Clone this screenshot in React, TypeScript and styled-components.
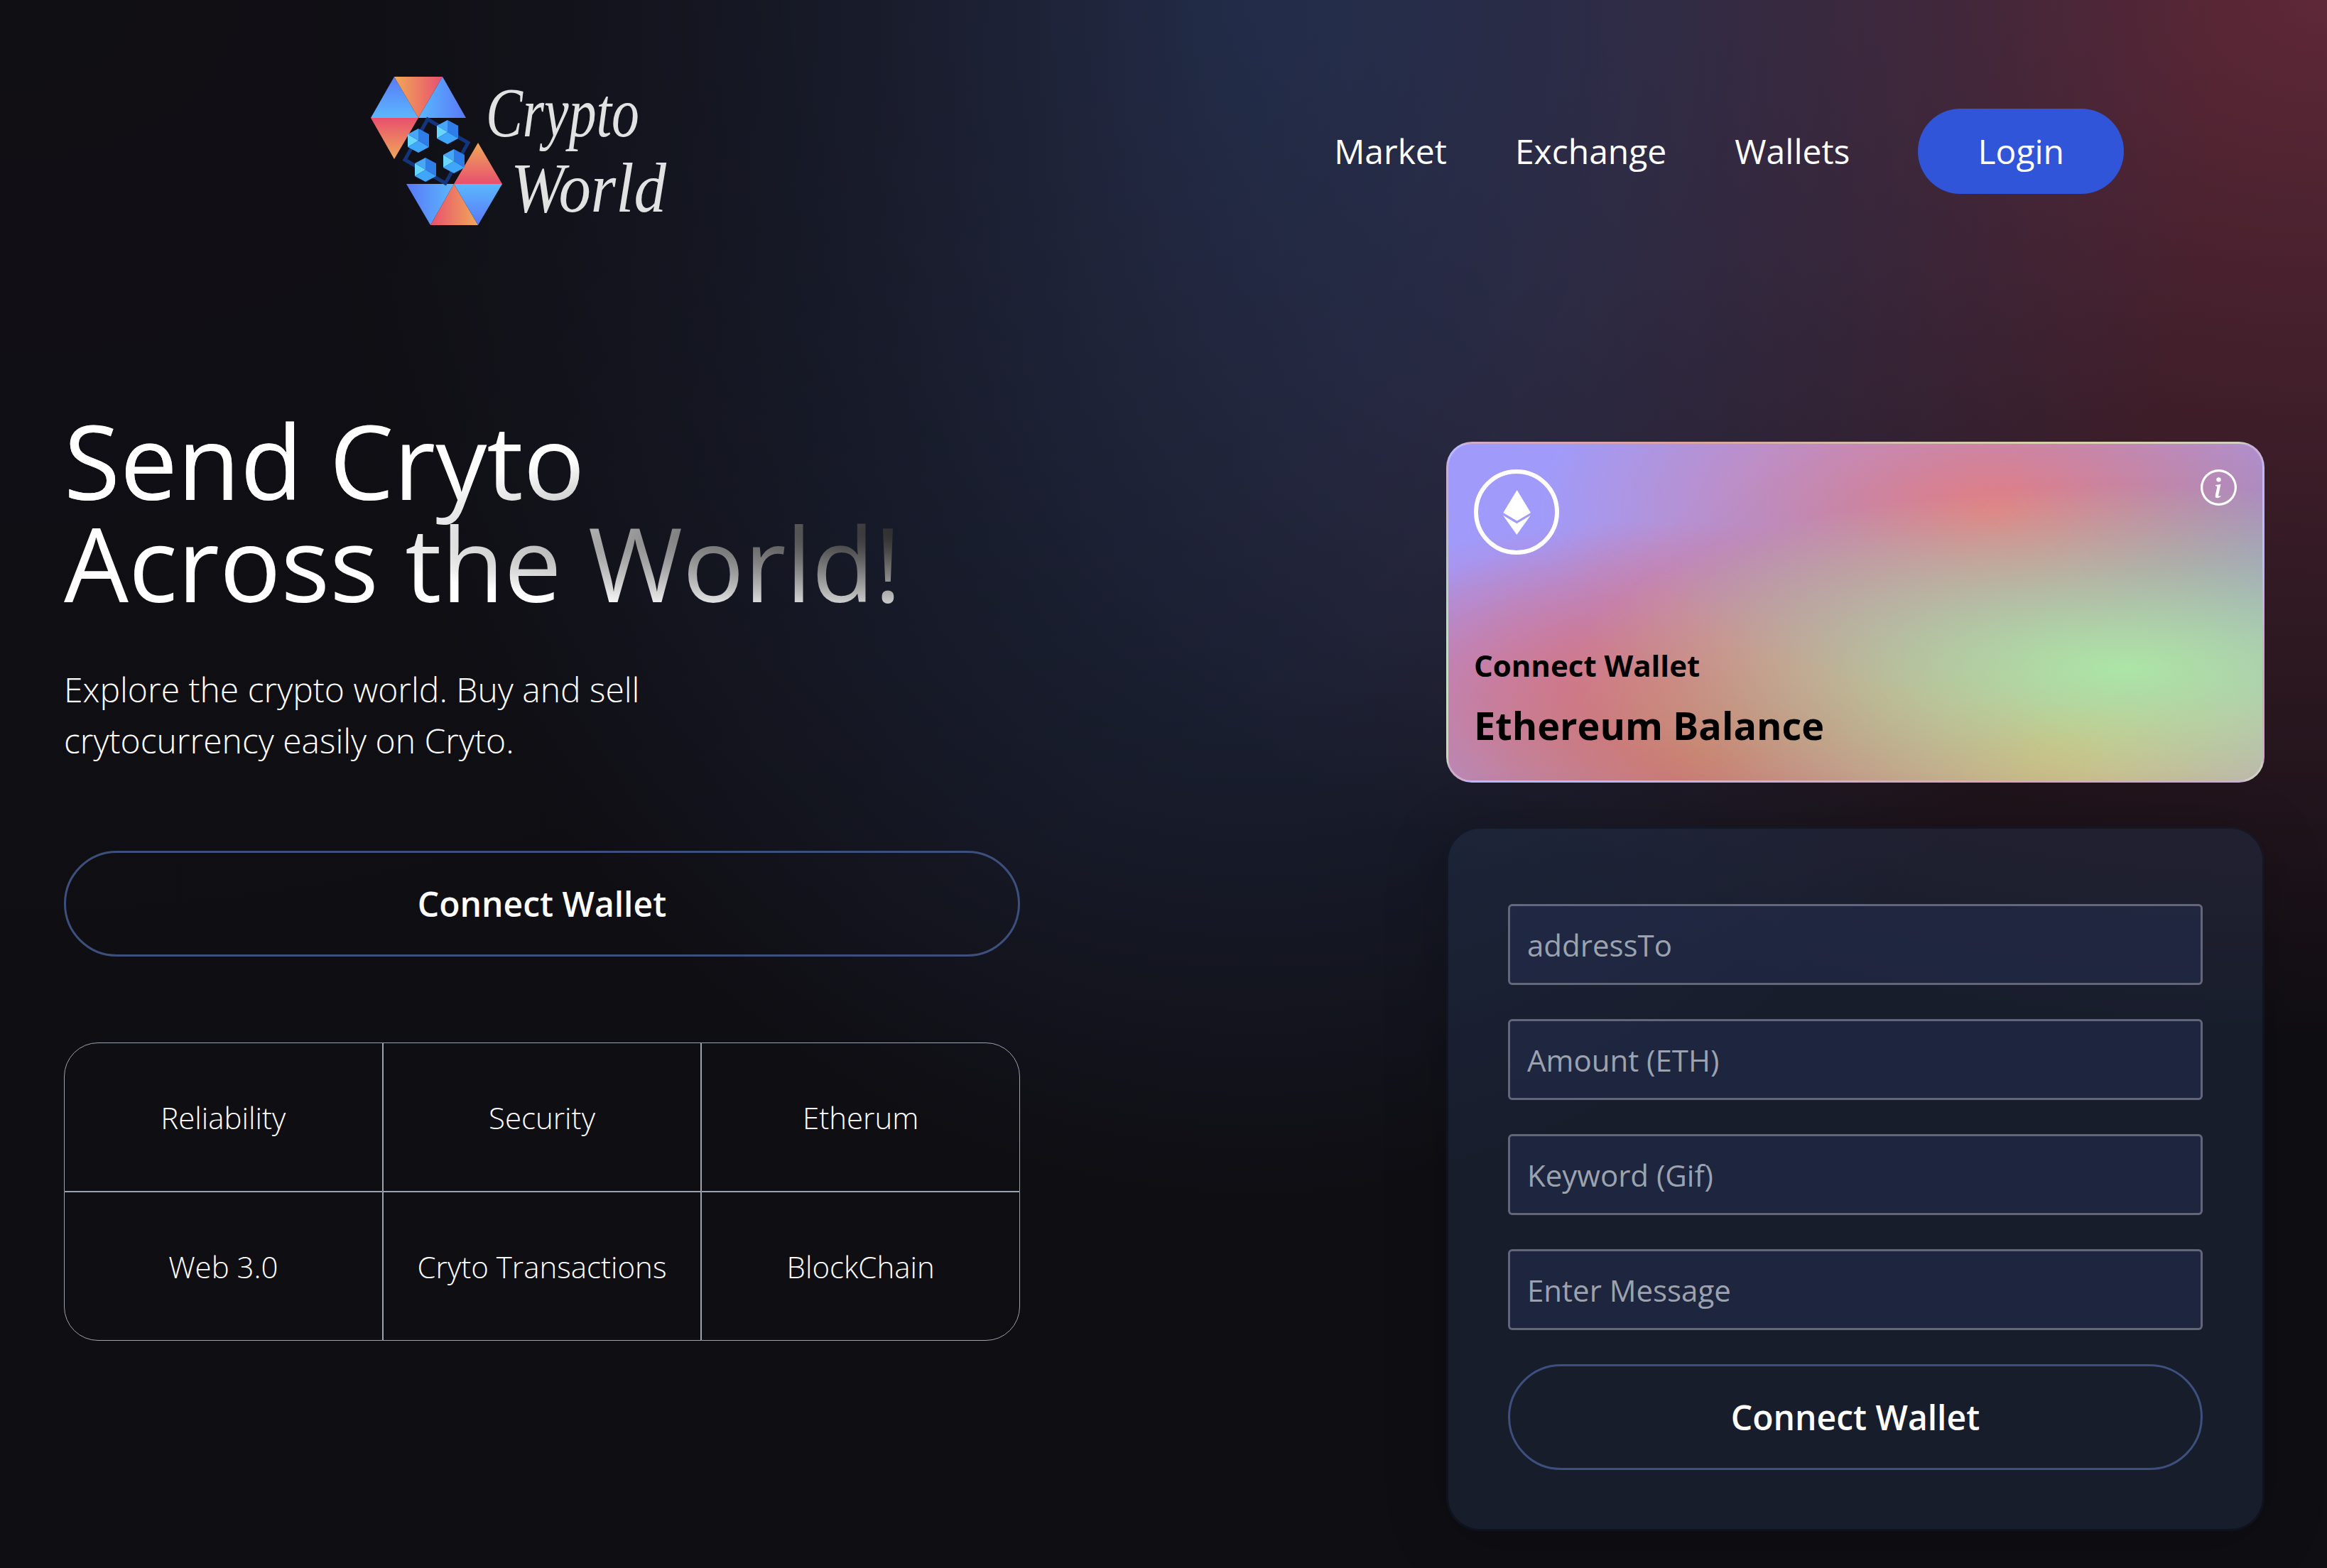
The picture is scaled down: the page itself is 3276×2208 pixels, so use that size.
import React from 'react';
import styled, { createGlobalStyle } from 'styled-components';
import { SiEthereum } from 'react-icons/si';
import { BsInfoCircle } from 'react-icons/bs';

const GlobalStyle = createGlobalStyle`
  html, body {
    margin: 0;
    background: #0f0e13;
  }
  * {
    box-sizing: border-box;
  }
`

const Page = styled.div`
  min-height: 2208px;
  overflow: hidden;
  font-family: "Open Sans", sans-serif;
  color: #fff;
  background-color: #0f0e13;
  background-image:
    radial-gradient(at 0% 0%, hsla(253, 16%, 7%, 1) 0, transparent 50%),
    radial-gradient(at 54% 0%, #28365a 0, transparent 54%),
    radial-gradient(at 100% 0%, #5e2838 0, transparent 47%);
`
const Nav = styled.nav`
  display: flex;
  align-items: center;
  justify-content: space-between;
  padding: 91px 286px 91px 510px;
`
const LogoMark = styled.svg`
  display: block;
  width: 500px;
  height: 244px;
`
const LogoText = styled.text`
  font-family: "Liberation Serif", serif;
  font-style: italic;
  font-size: 100px;
  fill: #e2e2e2;
`
const NavList = styled.ul`
  display: flex;
  align-items: center;
  margin: 0;
  padding: 0;
  list-style: none;
  font-size: 48px;
  line-height: 72px;
`
const NavItem = styled.li`
  margin: 0 48px;
`
const LoginItem = styled.li`
  margin-left: 48px;
  padding: 24px 84px;
  border-radius: 60px;
  background: #3155d9;
`
const Main = styled.main`
  display: flex;
  justify-content: space-between;
  padding: 135px 88px 0 90px;
`
const Intro = styled.section`
  width: 1346px;
`
const Heading = styled.h1`
  margin: 0;
  padding: 15px 0 9px;
  font-size: 144px;
  line-height: 144px;
  font-weight: 400;
  color: transparent;
  background-color: #fff;
  background-image:
    radial-gradient(at 4% 36%, hsla(0, 0%, 100%, 1) 0, transparent 53%),
    radial-gradient(at 100% 60%, rgb(0, 0, 0) 0, transparent 50%);
  -webkit-background-clip: text;
  background-clip: text;
`
const Lead = styled.p`
  width: 1000px;
  margin: 62px 0 0;
  font-size: 48px;
  line-height: 72px;
  font-weight: 300;
`
const WalletButton = styled.button<{ $spaced?: boolean }>`
  display: block;
  width: 100%;
  height: 149px;
  margin-top: ${props => props.$spaced ? "119px" : "0"};
  padding: 0;
  border: 3px solid #3d4f7c;
  border-radius: 75px;
  background: transparent;
  color: #fff;
  font-family: inherit;
  font-size: 48px;
  font-weight: 600;
`
const Features = styled.div`
  display: grid;
  grid-template-columns: repeat(3, 1fr);
  margin-top: 121px;
`
const Feature = styled.div<{ $corner?: string }>`
  display: flex;
  align-items: center;
  justify-content: center;
  height: 210px;
  border: 1px solid #9ca3af;
  border-radius: ${props => props.$corner || "0"};
  font-size: 42px;
  font-weight: 300;
`
const Side = styled.section`
  width: 1152px;
  padding-top: 61px;
`
const EthCard = styled.div`
  display: flex;
  flex-direction: column;
  justify-content: space-between;
  height: 480px;
  padding: 36px;
  border: 3px solid rgba(255, 255, 255, 0.3);
  border-radius: 36px;
  color: #000;
  background-color: #a09bfa;
  background-image:
    radial-gradient(at 83% 67%, rgb(172, 229, 166) 0, transparent 58%),
    radial-gradient(at 67% 20%, hsla(357, 65%, 69%, 1) 0, transparent 59%),
    radial-gradient(at 88% 35%, hsla(222, 60%, 65%, 1) 0, transparent 50%),
    radial-gradient(at 31% 91%, hsla(9, 48%, 61%, 1) 0, transparent 52%),
    radial-gradient(at 27% 71%, hsla(336, 65%, 65%, 1) 0, transparent 49%),
    radial-gradient(at 74% 89%, hsla(30, 75%, 65%, 1) 0, transparent 51%),
    radial-gradient(at 53% 75%, hsla(174, 65%, 68%, 1) 0, transparent 45%);
`
const CardTop = styled.div`
  display: flex;
  align-items: flex-start;
  justify-content: space-between;
  color: #fff;
`
const EthBadge = styled.div`
  display: flex;
  align-items: center;
  justify-content: center;
  width: 120px;
  height: 120px;
  border: 6px solid #fff;
  border-radius: 50%;
`
const CardLabel = styled.p`
  margin: 0;
  font-size: 42px;
  line-height: 60px;
  font-weight: 700;
`
const CardTitle = styled.p`
  margin: 12px 0 0;
  font-size: 54px;
  line-height: 84px;
  font-weight: 700;
`
const SendForm = styled.form`
  display: flex;
  flex-direction: column;
  margin-top: 62px;
  padding: 106px 84px 83px;
  border: 3px solid rgba(0, 0, 0, 0.3);
  border-radius: 48px;
  background: rgba(38, 52, 82, 0.4);
  box-shadow: 0 12px 90px rgba(0, 0, 0, 0.2);
`
const Field = styled.input`
  width: 100%;
  height: 114px;
  margin-bottom: 48px;
  padding: 24px;
  border: 3px solid rgba(255, 255, 255, 0.3);
  border-radius: 6px;
  outline: none;
  background: rgba(39, 51, 89, 0.4);
  color: #fff;
  font-family: inherit;
  font-size: 42px;

  &::placeholder {
    color: #9ca3af;
    opacity: 1;
  }
`

const features = [
  { label: "Reliability", corner: "48px 0 0 0" },
  { label: "Security" },
  { label: "Etherum", corner: "0 48px 0 0" },
  { label: "Web 3.0", corner: "0 0 0 48px" },
  { label: "Cryto Transactions" },
  { label: "BlockChain", corner: "0 0 48px 0" },
]

const fields = ["addressTo", "Amount (ETH)", "Keyword (Gif)", "Enter Message"]

const cubes = [[120, 91], [79, 103], [129, 132], [89, 144]]

function Logo() {
  return (
    <LogoMark viewBox="0 -4 500 244">
      <defs>
        <linearGradient id="blueDown" x1="0" y1="0" x2="0" y2="1">
          <stop offset="0" stopColor="#5a78f6" />
          <stop offset="1" stopColor="#5ab8ff" />
        </linearGradient>
        <linearGradient id="blueUp" x1="0" y1="0" x2="0" y2="1">
          <stop offset="0" stopColor="#5ab8ff" />
          <stop offset="1" stopColor="#5a78f6" />
        </linearGradient>
        <linearGradient id="blueRight" x1="0" y1="0" x2="1" y2="0">
          <stop offset="0" stopColor="#5ab8ff" />
          <stop offset="1" stopColor="#5a78f6" />
        </linearGradient>
        <linearGradient id="blueLeft" x1="0" y1="0" x2="1" y2="0">
          <stop offset="0" stopColor="#5a78f6" />
          <stop offset="1" stopColor="#5ab8ff" />
        </linearGradient>
        <linearGradient id="warmRight" x1="0" y1="0" x2="1" y2="0">
          <stop offset="0" stopColor="#f0a858" />
          <stop offset="1" stopColor="#e8506e" />
        </linearGradient>
        <linearGradient id="warmLeft" x1="0" y1="0" x2="1" y2="0">
          <stop offset="0" stopColor="#e8506e" />
          <stop offset="1" stopColor="#f0a858" />
        </linearGradient>
        <linearGradient id="warmDown" x1="0" y1="0" x2="0" y2="1">
          <stop offset="0" stopColor="#e8506e" />
          <stop offset="1" stopColor="#f0a858" />
        </linearGradient>
        <linearGradient id="warmUp" x1="0" y1="0" x2="0" y2="1">
          <stop offset="0" stopColor="#f0a858" />
          <stop offset="1" stopColor="#e8506e" />
        </linearGradient>
      </defs>
      <polygon points="45,13 12,71 79,71" fill="url(#blueDown)" />
      <polygon points="45,13 113,13 79,71" fill="url(#warmRight)" />
      <polygon points="113,13 79,71 146,71" fill="url(#blueRight)" />
      <polygon points="12,71 79,71 45,129" fill="url(#warmDown)" />
      <polygon points="163,106 129,164 197,164" fill="url(#warmUp)" />
      <polygon points="62,164 129,164 96,222" fill="url(#blueLeft)" />
      <polygon points="129,164 96,222 163,222" fill="url(#warmLeft)" />
      <polygon points="129,164 197,164 163,222" fill="url(#blueUp)" />
      <polygon points="92,73 149,106 117,163 60,130" fill="none" stroke="#12357e" strokeWidth="5" />
      {cubes.map(([x, y]) => (
        <g key={x} transform={`translate(${x} ${y})`}>
          <polygon points="0,-17 -15,-9 0,0" fill="#48a6f6" />
          <polygon points="0,-17 15,-9 15,9 0,0" fill="#2f7de8" />
          <polygon points="-15,-9 -15,9 0,0" fill="#68d6ff" />
          <polygon points="-15,9 0,17 15,9 0,0" fill="#40a6fb" />
        </g>
      ))}
      <LogoText x="174" y="97" textLength="216" lengthAdjust="spacingAndGlyphs">Crypto</LogoText>
      <LogoText x="209" y="203" textLength="219" lengthAdjust="spacingAndGlyphs">World</LogoText>
    </LogoMark>
  )
}

function App() {
  return (
    <Page>
      <GlobalStyle />
      <Nav>
        <Logo />
        <NavList>
          <NavItem>Market</NavItem>
          <NavItem>Exchange</NavItem>
          <NavItem>Wallets</NavItem>
          <LoginItem>Login</LoginItem>
        </NavList>
      </Nav>
      <Main>
        <Intro>
          <Heading>Send Cryto<br />Across the World!</Heading>
          <Lead>Explore the crypto world. Buy and sell crytocurrency easily on Cryto.</Lead>
          <WalletButton type="button" $spaced>Connect Wallet</WalletButton>
          <Features>
            {features.map((f) => (
              <Feature key={f.label} $corner={f.corner}>{f.label}</Feature>
            ))}
          </Features>
        </Intro>
        <Side>
          <EthCard>
            <CardTop>
              <EthBadge><SiEthereum size={63} color="#fff" /></EthBadge>
              <BsInfoCircle size={51} color="#fff" />
            </CardTop>
            <div>
              <CardLabel>Connect Wallet</CardLabel>
              <CardTitle>Ethereum Balance</CardTitle>
            </div>
          </EthCard>
          <SendForm>
            {fields.map((name) => <Field key={name} placeholder={name} />)}
            <WalletButton type="button">Connect Wallet</WalletButton>
          </SendForm>
        </Side>
      </Main>
    </Page>
  );
}

export default App;
